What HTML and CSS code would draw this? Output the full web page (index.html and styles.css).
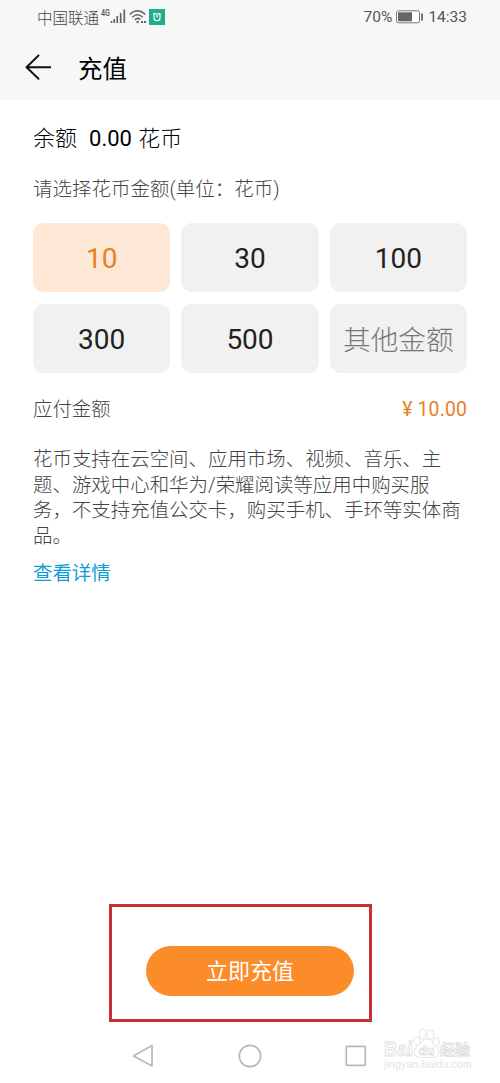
FILE: index.html
```html
<!DOCTYPE html>
<html lang="zh-CN">
<head>
	<meta charset="utf-8">
	<title>充值</title>
	<link rel="stylesheet" href="styles.css">
</head>
<body>
	<header class="top">
		<div class="status">
			<span class="carrier">中国联通</span>
			<svg class="signal" width="26" height="18" viewBox="0 0 26 18">
				<text class="net" x="0" y="8" textLength="9" lengthAdjust="spacingAndGlyphs">4G</text>
				<path d="M10.500 13v2M13.300 11v4M16.300 8v7M19.700 5v10M23.300 1.500v13.500" stroke="#666" stroke-width="1.700"/>
			</svg>
			<svg class="wifi" width="18" height="18" viewBox="0 0 18 18" fill="none" stroke="#666" stroke-width="1.500">
				<path d="M.8 6.500Q8.500-1 16.300 6.500M3.300 9.300Q8.500 4 13.800 9.300M5.800 12Q8.500 9 11.500 11.500"/>
				<circle cx="8.600" cy="14" r="1.200" fill="#666" stroke="none"/>
				<path d="M12 14h2m1 0h2" stroke-width="2"/>
			</svg>
			<svg class="app" width="16" height="16" viewBox="0 0 16 16">
				<rect width="16" height="16" fill="#1eae8c"/>
				<path d="M7.500 4.700H5V9Q5 11.700 8 11.700T11 9V4.700H9.500L8 6v2.500" fill="none" stroke="#fff" stroke-width="1.200"/>
			</svg>
			<span class="percent">70%</span>
			<svg class="battery" width="28" height="14" viewBox="0 0 28 14">
				<rect x=".5" y=".8" width="23" height="12" rx="2" fill="#fff" stroke="#777"/>
				<rect x="2" y="2.300" width="14" height="9" fill="#666"/>
				<path d="M26 3.500v7" stroke="#666" stroke-width="1.800"/>
			</svg>
			<span class="time">14:33</span>
		</div>
		<div class="titlebar">
			<svg width="26" height="26" viewBox="0 0 26 26" fill="none" stroke="#111" stroke-width="1.900" stroke-linecap="round" stroke-linejoin="round">
				<path d="M13.500 1.500L1.500 13.200l12 11.600M1.500 13.200h24"/>
			</svg>
			<h1>充值</h1>
		</div>
	</header>

	<main>
		<div class="balance"><span>余额</span><span><b>0.00</b> 花币</span></div>
		<div class="prompt">请选择花币金额(单位：花币)</div>

		<div class="amounts">
			<div class="amount selected">10</div>
			<div class="amount">30</div>
			<div class="amount">100</div>
			<div class="amount">300</div>
			<div class="amount">500</div>
			<div class="amount other">其他金额</div>
		</div>

		<div class="payable">
			<span>应付金额</span>
			<span class="price">¥ 10.00</span>
		</div>

		<p class="note">花币支持在云空间、应用市场、视频、音乐、主<br>题、游戏中心和华为/荣耀阅读等应用中购买服<br>务，不支持充值公交卡，购买手机、手环等实体商<br>品。</p>
		<a class="details">查看详情</a>
	</main>

	<div class="highlight">
		<div class="submit">立即充值</div>
	</div>

	<nav>
		<svg width="22" height="26" viewBox="0 0 22 26"><path d="M20 2.500v20.500L1.500 13z"/></svg>
		<svg width="24" height="26" viewBox="0 0 24 26"><circle cx="12" cy="13" r="10.700"/></svg>
		<svg width="22" height="26" viewBox="0 0 22 26"><rect x="1.300" y="3.300" width="19" height="19" rx=".5"/></svg>
	</nav>

	<svg class="watermark" width="94" height="46" viewBox="0 0 94 46">
		<g fill="#fff" stroke="#dcdcdc" stroke-width=".8">
			<ellipse cx="35" cy="13" rx="3.300" ry="4.200" transform="rotate(-15 35 13)"/>
			<ellipse cx="40.500" cy="6" rx="3.300" ry="4.800"/>
			<ellipse cx="48.500" cy="6.500" rx="3.300" ry="4.600"/>
			<ellipse cx="54" cy="14" rx="3.200" ry="4.200" transform="rotate(15 54 14)"/>
			<path d="M44.500 11c-4 0-5 4-9 7-5 4-4.500 11 2 11.300 3 .2 11 .2 14 0 6.500-.3 7-7.300 2-11.300-4-3-5-7-9-7z"/>
			<text class="mark" x="2" y="28" textLength="29" lengthAdjust="spacingAndGlyphs">Bai</text>
			<text class="du" x="36.500" y="27" textLength="16">du</text>
			<text class="jy" x="58" y="27" textLength="30">经验</text>
		</g>
		<text class="site" x="2" y="40" textLength="88">jingyan.baidu.com</text>
	</svg>
</body>
</html>
```
FILE: styles.css
```css
* {
	box-sizing: border-box;
}

body {
	margin: 0;
	width: 500px;
	height: 1083px;
	display: flex;
	flex-direction: column;
	position: relative;
	overflow: hidden;
	background: #fff;
	color: #444;
	font-family: Roboto, "Noto Sans CJK SC", sans-serif;
	font-weight: 300;
}

svg {
	display: block;
	flex: none;
}

.top {
	height: 100px;
	background: #f7f7f7;
}

.status {
	display: flex;
	align-items: center;
	height: 34px;
	padding: 0 33px 0 37px;
	font-size: 15.500px;
	color: #555;
}

.carrier {
	color: #444;
}

.signal {
	margin-left: 2px;
}

.wifi {
	margin-left: 2px;
}

.app {
	margin-left: 2px;
}

.net {
	font-size: 9px;
	font-weight: 500;
	fill: #555;
}

.percent {
	margin-left: auto;
	font-weight: 400;
}

.battery {
	margin: 0 4px;
}

.time {
	font-weight: 400;
}

.titlebar {
	display: flex;
	align-items: center;
	height: 66px;
	padding-left: 25px;
	gap: 27px;
}

h1 {
	margin: 0;
	font-size: 24.500px;
	font-weight: 400;
	color: #000;
}

main {
	padding: 24px 33px 0;
}

.balance {
	display: flex;
	gap: 12px;
	line-height: 30px;
	font-size: 22px;
	color: #000;
}

.balance b {
	font-weight: 400;
	margin-right: 1px;
}

.prompt {
	margin-top: 21px;
	line-height: 30px;
	font-size: 19.500px;
}

.amounts {
	display: grid;
	grid-template-columns: repeat(3, 1fr);
	grid-auto-rows: 69px;
	gap: 12px 11px;
	margin-top: 18px;
}

.amount {
	display: flex;
	align-items: center;
	justify-content: center;
	padding-top: 2px;
	border-radius: 11px;
	background: #f1f1f1;
	font-size: 28px;
	font-weight: 400;
	color: #222;
}

.selected {
	background: #fee7d5;
	color: #e58225;
}

.other {
	padding: 0 0 2px;
	font-size: 27.700px;
	font-weight: 300;
	color: #777;
}

.payable {
	display: flex;
	justify-content: space-between;
	margin-top: 22px;
	line-height: 30px;
	font-size: 19.400px;
}

.price {
	letter-spacing: .15px;
	font-weight: 400;
	color: #e58225;
}

.note {
	margin: 22px 0 0;
	line-height: 25.500px;
	font-size: 19.450px;
	white-space: nowrap;
}

.details {
	display: block;
	margin-top: 10px;
	line-height: 30px;
	font-size: 19.400px;
	font-weight: 400;
	color: #0b9dd6;
}

.highlight {
	width: 263px;
	height: 118px;
	margin: auto 0 0 109px;
	padding: 39px 0 0 34px;
	border: 3px solid #c53038;
}

.submit {
	width: 208px;
	height: 50px;
	padding-top: 1px;
	border-radius: 25px;
	background: #fc8b29;
	line-height: 50px;
	text-align: center;
	font-size: 22px;
	font-weight: 400;
	color: #fff;
}

nav {
	display: flex;
	justify-content: space-between;
	margin: 21px 133px 14px 132px;
	fill: none;
	stroke: #b9b9b9;
	stroke-width: 1.700;
	stroke-linejoin: round;
}

.watermark {
	position: absolute;
	left: 382px;
	top: 1028px;
}

.mark {
	font: bold 20px "Liberation Sans", sans-serif;
}

.du {
	font: bold 13px "Liberation Sans", sans-serif;
}

.jy {
	font: bold 15px "Noto Sans CJK SC", sans-serif;
}

.site {
	font: 11px "Liberation Sans", sans-serif;
	fill: #e4e4e4;
}
```
